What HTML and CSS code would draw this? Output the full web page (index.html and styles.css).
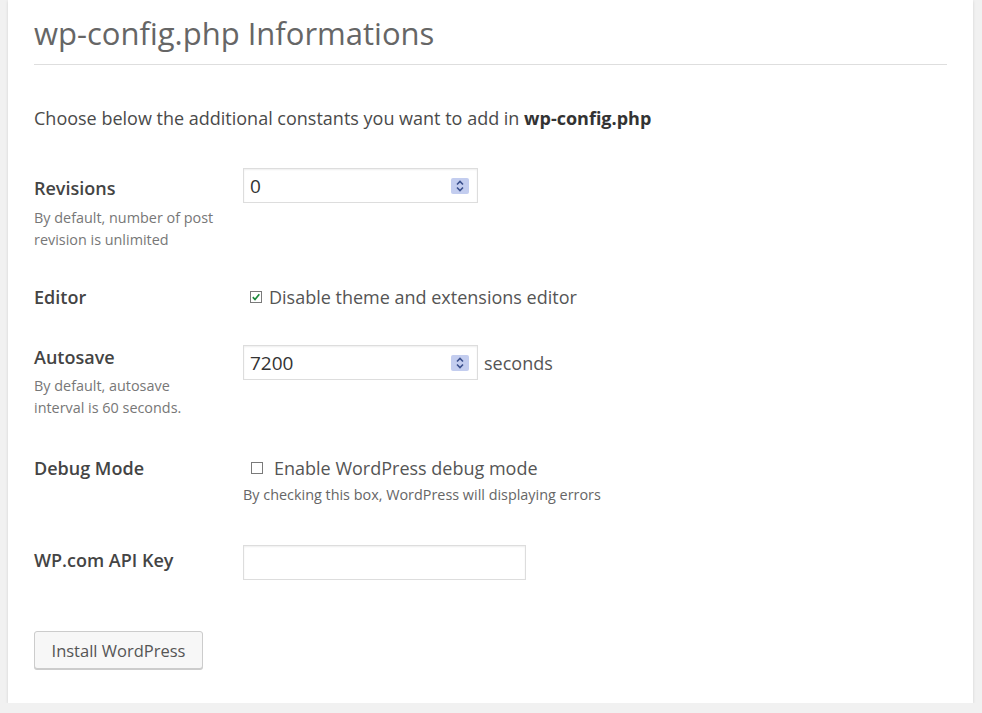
FILE: index.html
```html
<!DOCTYPE html>
<html lang="en">
<head>
<meta charset="utf-8">
<title>wp-config.php Informations</title>
<link rel="stylesheet" href="styles.css">
</head>
<body>
<div class="card">
  <h1 class="title">wp-config.php Informations</h1>
  <p class="intro">Choose below the additional constants you want to add in <strong>wp-config.php</strong></p>

  <div class="form-row row-revisions">
    <div class="label-col">
      <div class="label">Revisions</div>
      <div class="desc">By default, number of post<br>revision is unlimited</div>
    </div>
    <div class="field-col">
      <div class="num-box">
        <input class="num-input" type="text" value="0">
        <span class="spin"><svg width="18" height="16" viewBox="0 0 18 16"><path d="M6 6.5 L9 3.5 L12 6.5" fill="none" stroke="#3a4f8c" stroke-width="1.6"/><path d="M6 9.5 L9 12.5 L12 9.5" fill="none" stroke="#3a4f8c" stroke-width="1.6"/></svg></span>
      </div>
    </div>
  </div>

  <div class="form-row row-editor">
    <div class="label-col">
      <div class="label">Editor</div>
    </div>
    <div class="field-col">
      <label class="check">
        <span class="box"><svg width="12" height="12" viewBox="0 0 12 12"><rect x="0.5" y="0.5" width="11" height="11" fill="#fff" stroke="#7a7a7a"/><path d="M2.8 6.2 L5 8.5 L9.3 3.2" fill="none" stroke="#1d8a3c" stroke-width="1.7"/></svg></span>
        <span class="check-text">Disable theme and extensions editor</span>
      </label>
    </div>
  </div>

  <div class="form-row row-autosave">
    <div class="label-col">
      <div class="label">Autosave</div>
      <div class="desc">By default, autosave<br>interval is 60 seconds.</div>
    </div>
    <div class="field-col inline">
      <div class="num-box">
        <input class="num-input" type="text" value="7200">
        <span class="spin"><svg width="18" height="16" viewBox="0 0 18 16"><path d="M6 6.5 L9 3.5 L12 6.5" fill="none" stroke="#3a4f8c" stroke-width="1.6"/><path d="M6 9.5 L9 12.5 L12 9.5" fill="none" stroke="#3a4f8c" stroke-width="1.6"/></svg></span>
      </div>
      <span class="unit">seconds</span>
    </div>
  </div>

  <div class="form-row row-debug">
    <div class="label-col">
      <div class="label">Debug Mode</div>
    </div>
    <div class="field-col">
      <label class="check check-debug">
        <span class="box"><svg width="12" height="12" viewBox="0 0 12 12"><rect x="0.5" y="0.5" width="11" height="11" fill="#fff" stroke="#7a7a7a"/></svg></span>
        <span class="check-text">Enable WordPress debug mode</span>
      </label>
      <div class="desc field-desc">By checking this box, WordPress will displaying errors</div>
    </div>
  </div>

  <div class="form-row row-api">
    <div class="label-col">
      <div class="label">WP.com API Key</div>
    </div>
    <div class="field-col">
      <input class="text-input" type="text" value="">
    </div>
  </div>

  <div class="actions">
    <button class="button" type="button">Install WordPress</button>
  </div>
</div>
</body>
</html>
```

FILE: styles.css
```css
html, body {
  margin: 0;
  padding: 0;
}
body {
  background: #f1f1f1;
  font-family: "Open Sans", "Liberation Sans", sans-serif;
  color: #444;
  overflow: hidden;
}
.card {
  box-sizing: border-box;
  width: 965px;
  margin-left: 8px;
  background: #fff;
  padding: 14px 26px 34px;
  box-shadow: 0 1px 3px rgba(0, 0, 0, 0.13);
}
.title {
  margin: 0;
  font-size: 31px;
  line-height: 38px;
  font-weight: 400;
  color: #666;
  padding-bottom: 12px;
  border-bottom: 1px solid #dedede;
}
.intro {
  margin: 41px 0 0;
  font-size: 18px;
  line-height: 25px;
  color: #4a4a4a;
}
.intro strong {
  color: #333;
  font-weight: 700;
}
.form-row {
  display: grid;
  grid-template-columns: 209px 1fr;
  align-items: start;
}
.label {
  font-size: 18px;
  line-height: 24px;
  font-weight: 600;
  color: #444;
}
.desc {
  margin-top: 6px;
  font-size: 14.4px;
  line-height: 22px;
  color: #777;
}
.row-revisions { margin-top: 37px; }
.row-revisions .label-col { padding-top: 8px; }
.row-revisions .desc { margin-top: 7px; }
.row-editor { margin-top: 34px; }
.row-autosave { margin-top: 36px; }
.row-debug { margin-top: 37px; }
.row-api { margin-top: 39px; }
.row-api .label-col { padding-top: 3px; }

.field-col.inline {
  display: flex;
  align-items: center;
  gap: 6px;
}
.num-box {
  box-sizing: border-box;
  width: 235px;
  height: 35px;
  display: flex;
  align-items: center;
  border: 1px solid #ddd;
  box-shadow: inset 0 1px 2px rgba(0, 0, 0, 0.07);
  background: #fff;
  padding: 0 8px 0 6px;
}
.num-input {
  flex: 1;
  min-width: 0;
  border: 0;
  outline: 0;
  padding: 0;
  background: transparent;
  font-family: "Open Sans", "Liberation Sans", sans-serif;
  font-size: 19px;
  color: #333;
}
.spin {
  display: flex;
  width: 18px;
  height: 16px;
  background: #c3cdef;
  border-radius: 2px;
}
.unit {
  font-size: 18px;
  color: #555;
}
.check {
  display: flex;
  align-items: center;
  gap: 7px;
  padding-left: 7px;
  height: 24px;
}
.check-debug {
  gap: 11px;
  padding-left: 8px;
}
.box {
  display: flex;
  width: 12px;
  height: 12px;
}
.check-text {
  font-size: 18px;
  color: #555;
}
.field-desc {
  margin-top: 4px;
  color: #666;
}
.text-input {
  box-sizing: border-box;
  width: 283px;
  height: 35px;
  border: 1px solid #ddd;
  box-shadow: inset 0 1px 2px rgba(0, 0, 0, 0.07);
  outline: 0;
  padding: 0 6px;
  font-family: "Open Sans", "Liberation Sans", sans-serif;
  font-size: 16px;
}
.actions {
  margin-top: 51px;
}
.button {
  box-sizing: border-box;
  width: 169px;
  height: 38px;
  background: #f7f7f7;
  border: 1px solid #ccc;
  border-radius: 3px;
  box-shadow: 0 1px 0 #ccc;
  font-family: "Open Sans", "Liberation Sans", sans-serif;
  font-size: 16.5px;
  color: #555;
  padding: 0;
  cursor: pointer;
}
```
